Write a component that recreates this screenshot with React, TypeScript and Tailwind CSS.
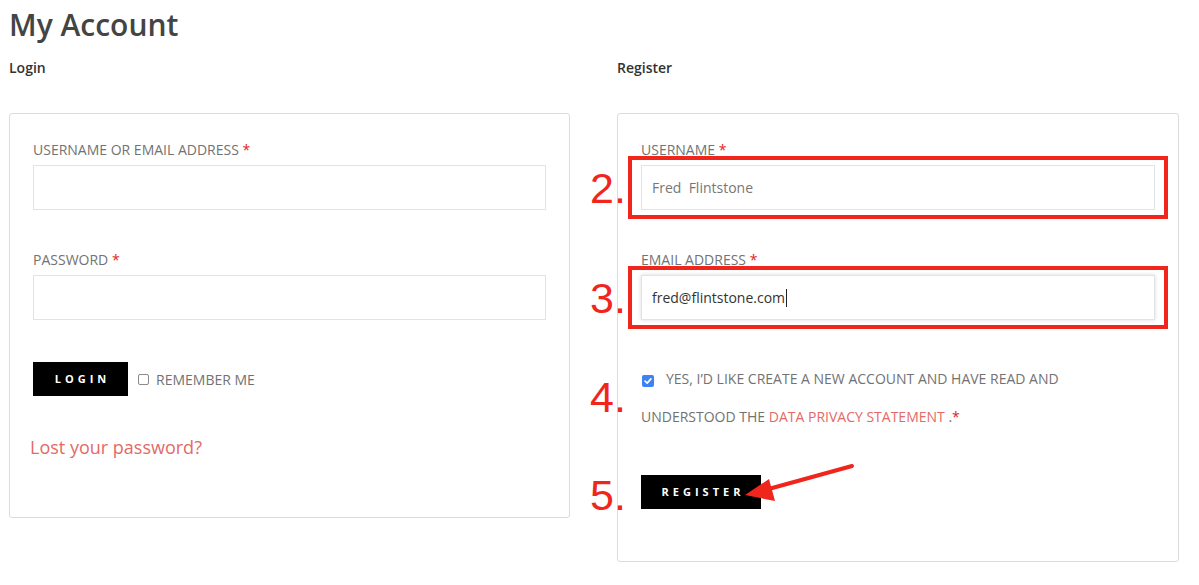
import type { ReactNode } from 'react'

function Label({ children }: { children: ReactNode }) {
  return (
    <div className="text-[14px] leading-[20px] text-[#727272] uppercase">
      {children} <span className="text-[#e2231a]">*</span>
    </div>
  )
}

function Mark({ n, className = '' }: { n: string; className?: string }) {
  return (
    <span
      className={`absolute left-[-51px] font-['Liberation_Sans',Arial,sans-serif] text-[43px] leading-none text-[#f0261c] ${className}`}
    >
      {n}
    </span>
  )
}

function Field({
  label,
  value,
  mark,
  focused,
  dim,
}: {
  label: string
  value?: string
  mark?: string
  focused?: boolean
  dim?: boolean
}) {
  return (
    <div>
      <Label>{label}</Label>
      <div className="relative mt-[5px]">
        <div
          className={`h-[45px] w-full border border-[#e3e3e3] bg-white px-[10px] flex items-center whitespace-pre text-[14px] ${
            dim ? 'text-[#777]' : 'text-[#333]'
          } ${focused ? 'shadow-[0_0_4px_rgba(0,0,0,0.15)]' : ''}`}
        >
          {value}
          {focused && <span className="ml-px inline-block h-[18px] w-px bg-[#222]" />}
        </div>
        {mark && (
          <>
            <div className="absolute -left-[13px] -right-[13px] -top-[9px] -bottom-[9px] border-[4px] border-[#f0261c]" />
            <Mark n={mark} className="top-1/2 -translate-y-1/2" />
          </>
        )}
      </div>
    </div>
  )
}

export default function App() {
  return (
    <div className="min-h-[585px] bg-white px-[9px] pt-[5px] font-['Open_Sans',sans-serif]">
      <h1 className="text-[30px] leading-[40px] font-semibold text-[#444]">My Account</h1>

      <div className="mt-[13px] grid grid-cols-[561px_562px] gap-[47px] items-start">
        {/* Login column */}
        <div>
          <h2 className="text-[14px] leading-[20px] font-semibold text-[#333]">Login</h2>
          <div className="mt-[35px] h-[405px] rounded-[3px] border border-[#dcdcdc] px-[23px] pt-[26px]">
            <Field label="Username or email address" />
            <div className="mt-[40px]">
              <Field label="Password" />
            </div>
            <div className="mt-[42px] flex items-center">
              <button className="h-[34px] w-[95px] bg-black text-[11px] font-bold tracking-[4px] text-white pl-[4px]">
                LOGIN
              </button>
              <span className="ml-[10px] h-[11px] w-[11px] rounded-[2px] border border-[#8a8a8a] bg-white" />
              <span className="ml-[7px] text-[14px] text-[#727272]">REMEMBER ME</span>
            </div>
            <a className="mt-[38px] ml-[-3px] block text-[18px] leading-[26px] text-[#e36a66]">
              Lost your password?
            </a>
          </div>
        </div>

        {/* Register column */}
        <div>
          <h2 className="text-[14px] leading-[20px] font-semibold text-[#333]">Register</h2>
          <div className="mt-[35px] h-[449px] rounded-[3px] border border-[#dcdcdc] px-[23px] pt-[26px]">
            <Field label="Username" value="Fred  Flintstone" mark="2." dim />
            <div className="mt-[40px]">
              <Field label="Email address" value="fred@flintstone.com" mark="3." focused />
            </div>

            <div className="relative mt-[40px] text-[14px] leading-[38px] text-[#727272] uppercase">
              <Mark n="4." className="top-[16px]" />
              <span className="relative top-[1px] mr-[12px] ml-[1px] inline-flex h-[12px] w-[12px] items-center justify-center rounded-[2px] bg-[#3b82f6] align-[-1px]">
                <svg viewBox="0 0 12 12" className="h-[10px] w-[10px]" fill="none" stroke="white" strokeWidth={2}>
                  <path d="M2.5 6.2 5 8.5l4.5-5" strokeLinecap="round" strokeLinejoin="round" />
                </svg>
              </span>
              Yes, I’d like create a new account and have read and
              <br />
              understood the <span className="text-[#e36a66]">Data Privacy Statement</span> .
              <span className="text-[#e2231a]">*</span>
            </div>

            <div className="relative mt-[39px] w-[120px]">
              <Mark n="5." className="top-[-1px]" />
              <button className="h-[34px] w-[120px] bg-black text-[11px] font-bold tracking-[4px] text-white pl-[4px]">
                REGISTER
              </button>
              <svg
                className="absolute left-[102px] top-[-12px] overflow-visible"
                width="112"
                height="40"
                viewBox="0 0 112 40"
              >
                <line x1="109" y1="3" x2="22" y2="27" stroke="#f0261c" strokeWidth="4" strokeLinecap="round" />
                <polygon points="2,32 26,16 32,38" fill="#f0261c" />
              </svg>
            </div>
          </div>
        </div>
      </div>
    </div>
  )
}
